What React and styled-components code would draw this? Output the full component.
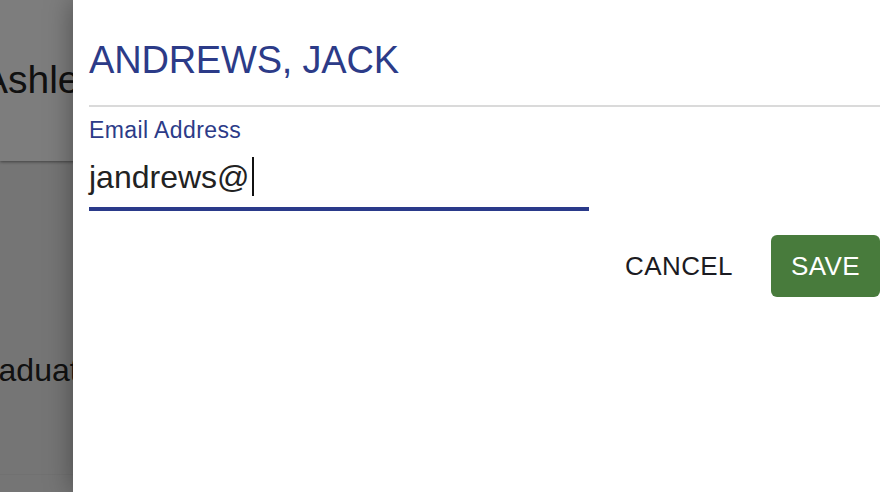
import React from "react";
import styled, { createGlobalStyle } from "styled-components";

const GlobalStyle = createGlobalStyle`
  html, body { margin: 0; padding: 0; overflow: hidden; }
  body { font-family: "Liberation Sans", Arial, sans-serif; }
  * { box-sizing: border-box; }
`;

const Viewport = styled.div`
  position: relative;
  width: 896px;
  height: 492px;
  overflow: hidden;
`;

/* underlying page (behind the drawer) */
const BackPage = styled.div`
  position: relative;
  z-index: 0;
  display: flex;
  flex-direction: column;
  height: 100%;
  background: #ebebeb;
  color: #222;
`;

const BackCard = styled.div`
  display: flex;
  align-items: flex-start;
  height: 161px;
  padding-top: 58px;
  background: #fafafa;
  box-shadow: 0 1px 3px rgba(0, 0, 0, 0.45);
  position: relative;
  z-index: 1;
`;

const BackRow = styled.div`
  display: flex;
  align-items: flex-start;
  height: 314px;
  padding-top: 191px;
  border-bottom: 1px solid #e2e2e2;
`;

const ScrolledText = styled.span`
  margin-left: ${(p) => p.$shift}px;
  font-size: ${(p) => p.$size}px;
  line-height: 1.15;
  white-space: nowrap;
`;

const Scrim = styled.div`
  position: absolute;
  inset: 0;
  z-index: 1;
  background: rgba(0, 0, 0, 0.5);
`;

const Drawer = styled.aside`
  position: absolute;
  top: 0;
  right: 0;
  bottom: 0;
  z-index: 2;
  width: 823px;
  background: #fff;
  box-shadow: 0 0 26px rgba(0, 0, 0, 0.38);
  padding: 38px 16px 0 16px;
  display: flex;
  flex-direction: column;
`;

const Title = styled.h1`
  margin: 0;
  font-size: 38px;
  line-height: 44px;
  font-weight: 400;
  color: #2c3b88;
  letter-spacing: -0.2px;
`;

const Divider = styled.hr`
  margin: 23px 0 0 0;
  border: none;
  height: 2px;
  background: #dadada;
`;

const Field = styled.div`
  display: flex;
  flex-direction: column;
  width: 500px;
  margin-top: 10px;
`;

const Label = styled.label`
  font-size: 23px;
  line-height: 26px;
  letter-spacing: 0.4px;
  color: #2c3b88;
`;

const InputLine = styled.div`
  display: flex;
  align-items: stretch;
  height: 53px;
  margin-top: 15px;
  padding-bottom: 11px;
  border-bottom: 4px solid #2a3a8a;
  font-size: 32px;
  line-height: 38px;
  color: #222;
`;

const Caret = styled.span`
  width: 2px;
  margin-left: 2px;
  margin-top: -1px;
  background: #111;
`;

const Actions = styled.div`
  display: flex;
  justify-content: flex-end;
  gap: 18px;
  margin-top: 24px;
`;

const Button = styled.button`
  height: 62px;
  padding: 0 20px;
  border: none;
  border-radius: 6px;
  font-family: "Liberation Sans", Arial, sans-serif;
  font-size: 26px;
  letter-spacing: 0.4px;
  cursor: pointer;
  background: ${(p) => (p.$primary ? "#487b3c" : "transparent")};
  color: ${(p) => (p.$primary ? "#fff" : "#1b1b22")};
`;

export default function App() {
  return (
    <Viewport>
      <GlobalStyle />
      <BackPage>
        <BackCard>
          <ScrolledText $shift={-18} $size={39}>
            Ashley
          </ScrolledText>
        </BackCard>
        <BackRow>
          <ScrolledText $shift={-37} $size={32}>
            Graduate
          </ScrolledText>
        </BackRow>
      </BackPage>
      <Scrim />
      <Drawer>
        <Title>ANDREWS, JACK</Title>
        <Divider />
        <Field>
          <Label>Email Address</Label>
          <InputLine>
            jandrews@
            <Caret />
          </InputLine>
        </Field>
        <Actions>
          <Button>CANCEL</Button>
          <Button $primary>SAVE</Button>
        </Actions>
      </Drawer>
    </Viewport>
  );
}
